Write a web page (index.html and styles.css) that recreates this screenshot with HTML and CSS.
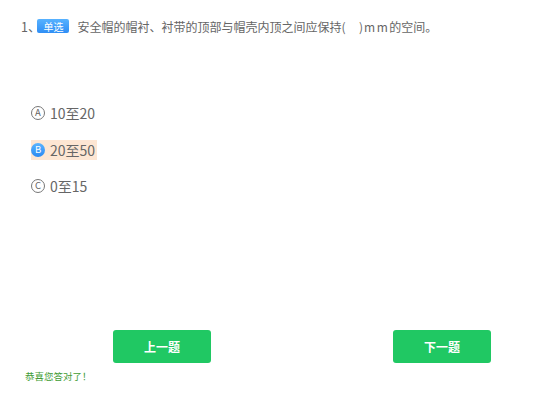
FILE: index.html
```html
<!DOCTYPE html>
<html lang="zh">
<head>
<meta charset="utf-8">
<link rel="stylesheet" href="styles.css">
</head>
<body>
<div class="page">
  <div class="question">
    <span class="num">1、</span>
    <span class="badge">单选</span>
    <span class="stem">安全帽的帽衬、衬带的顶部与帽壳内顶之间应保持(&nbsp;&nbsp;&nbsp;&nbsp;&nbsp;)<span class="unit">mm</span>的空间。</span>
  </div>
  <ul class="options">
    <li class="option"><span class="mark">A</span><span class="label">10至20</span></li>
    <li class="option selected"><span class="mark">B</span><span class="label">20至50</span></li>
    <li class="option"><span class="mark">C</span><span class="label">0至15</span></li>
  </ul>
  <div class="nav">
    <button class="btn">上一题</button>
    <button class="btn">下一题</button>
  </div>
  <div class="result">恭喜您答对了！</div>
</div>
</body>
</html>
```
FILE: styles.css
```css
* { box-sizing: border-box; }
html, body { margin: 0; padding: 0; background: #fff; }
body {
  font-family: "Noto Sans CJK SC", "Noto Sans", sans-serif;
  color: #666;
}
.page { padding: 18px 0 0 0; }
.question {
  display: flex;
  align-items: center;
  height: 16px;
  padding-left: 21px;
  font-size: 12.5px;
  color: #666;
}
.num { margin-right: -3px; }
.badge {
  display: inline-flex;
  align-items: center;
  justify-content: center;
  width: 32px;
  height: 14px;
  border-radius: 2px;
  background: linear-gradient(180deg, #58b2ff 0%, #2f8ef5 100%);
  color: #fff;
  font-size: 10px;
  margin-right: 8px;
}
.stem { font-size: 12px; }
.unit {
  letter-spacing: 1.5px;
  margin-left: 1px;
}
.options {
  list-style: none;
  margin: 69px 0 0 0;
  padding: 0 0 0 31px;
  display: flex;
  flex-direction: column;
  align-items: flex-start;
  gap: 16.5px;
}
.option {
  display: inline-flex;
  align-items: center;
  height: 20px;
  padding-right: 2px;
  font-size: 14px;
  color: #666;
}
.mark {
  display: inline-flex;
  align-items: center;
  justify-content: center;
  width: 14px;
  height: 14px;
  border-radius: 50%;
  border: 1px solid #777;
  font-size: 9.5px;
  line-height: 1;
  color: #666;
  margin-right: 5px;
}
.selected { background: #fde6d3; }
.selected .mark {
  border: none;
  background: linear-gradient(180deg, #5ab4ff 0%, #2b8af2 100%);
  color: #fff;
}
.nav {
  display: flex;
  justify-content: space-between;
  margin-top: 134px;
  padding: 0 66px 0 113px;
}
.btn {
  width: 98px;
  height: 33px;
  border: none;
  border-radius: 3px;
  background: #20c863;
  color: #fff;
  font-family: "Noto Sans CJK SC", sans-serif;
  font-size: 12px;
  font-weight: bold;
}
.result {
  margin-top: 7px;
  padding-left: 25px;
  font-size: 9.5px;
  line-height: 12px;
  color: #3f9c35;
}
```
